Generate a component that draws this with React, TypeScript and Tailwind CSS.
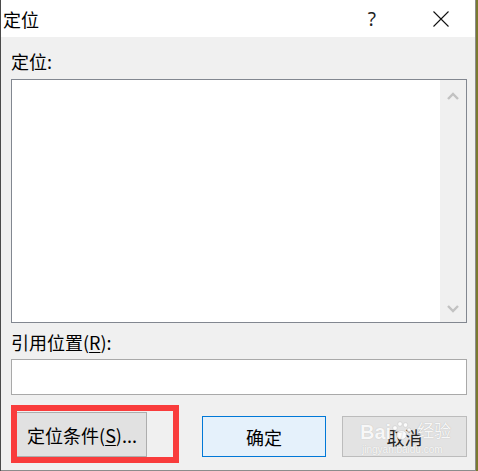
import React from "react";

const font = { fontFamily: '"Noto Sans CJK SC", "Microsoft YaHei", sans-serif' };

function ChevronUp() {
  return (
    <svg width="12" height="10" viewBox="0 0 12 10">
      <path d="M1 8 L6 3 L11 8" fill="none" stroke="#c2c2c2" strokeWidth="2.4" />
    </svg>
  );
}
function ChevronDown() {
  return (
    <svg width="12" height="10" viewBox="0 0 12 10">
      <path d="M1 2 L6 7 L11 2" fill="none" stroke="#c2c2c2" strokeWidth="2.4" />
    </svg>
  );
}

export default function App() {
  return (
    <div className="w-[478px] h-[471px] flex bg-[#7a7a30] text-[#000]" style={font}>
      <div className="w-[1px] h-full bg-[#4a4a4a]" />
      <div className="relative w-[475px] h-full flex flex-col border-r border-b border-[#8c8c8c] bg-[#f0f0f0]">
        {/* title bar */}
        <div className="h-[37px] bg-white flex items-center shrink-0">
          <span className="pl-[2px] text-[18px] leading-[24px]">定位</span>
          <span className="ml-auto mr-[57px] text-[19px] leading-[24px] text-[#222]" style={{ fontFamily: '"Noto Sans", sans-serif' }}>?</span>
          <svg width="16" height="16" viewBox="0 0 16 16" className="mr-[26px]">
            <path d="M0.5 0.5 L15.5 15.5 M15.5 0.5 L0.5 15.5" stroke="#111" strokeWidth="1.1" />
          </svg>
        </div>
        {/* body */}
        <div className="flex flex-col pl-[10px] pr-[8px]">
          <div className="mt-[12px] h-[24px] text-[18px] leading-[24px]">定位:</div>
          <div className="mt-[6px] h-[244px] border border-[#828790] bg-white flex justify-end">
            <div className="w-[26px] h-full bg-[#f0f0f0] flex flex-col items-center justify-between pt-[11px] pb-[8px]">
              <ChevronUp />
              <ChevronDown />
            </div>
          </div>
          <div className="mt-[7px] h-[24px] text-[18px] leading-[24px]">
            引用位置(<span className="underline underline-offset-2">R</span>):
          </div>
          <div className="mt-[5px] h-[36px] border border-[#a9a9a9] bg-white" />
          <div className="mt-[17px] flex items-end">
            <div className="w-[136px] h-[45px] border border-[#adadad] bg-[#e1e1e1] flex items-center justify-center text-[18px] leading-[24px]">
              <span className="pl-[6px]">定位条件(<span className="underline underline-offset-2">S</span>)...</span>
            </div>
            <div className="ml-[55px] w-[124px] h-[41px] border border-[#0078d7] bg-[#e5f1fb] flex items-center justify-center text-[18px] leading-[24px]">
              确定
            </div>
            <div className="relative ml-[16px] w-[125px] h-[41px] border border-[#bcbcbc] bg-[#e3e3e3] flex items-center justify-center text-[18px] leading-[24px] text-[#222] overflow-visible">
              取消
              <div className="absolute left-[17px] top-[4px] flex items-end text-white/90 font-bold" style={{ fontFamily: '"Liberation Sans", "Noto Sans CJK SC", sans-serif' }}>
                <span className="text-[20px] leading-[22px]" style={{ textShadow: "0 0 1px #b0b0b0" }}>Bai</span>
                <svg width="20" height="22" viewBox="0 0 20 22" className="-mt-[10px] opacity-90">
                  <circle cx="4" cy="7" r="2.3" fill="white" stroke="#c8c8c8" strokeWidth="0.6" />
                  <circle cx="9" cy="3" r="2.3" fill="white" stroke="#c8c8c8" strokeWidth="0.6" />
                  <circle cx="14.5" cy="4" r="2.3" fill="white" stroke="#c8c8c8" strokeWidth="0.6" />
                  <circle cx="18" cy="9" r="2" fill="white" stroke="#c8c8c8" strokeWidth="0.6" />
                  <ellipse cx="10.5" cy="14" rx="5" ry="4.5" fill="white" stroke="#c8c8c8" strokeWidth="0.6" />
                </svg>
                <span className="ml-[6px] text-[17px] leading-[22px] font-normal" style={{ textShadow: "0 0 1px #a8a8a8" }}>经验</span>
              </div>
              <div className="absolute left-[19px] top-[27px] text-[10px] leading-[12px] text-white/90" style={{ fontFamily: '"Liberation Sans", sans-serif', textShadow: "0 0 1px #b0b0b0" }}>
                jingyan.baidu.com
              </div>
            </div>
          </div>
        </div>
        {/* red annotation */}
        <div className="absolute left-[10px] top-[405px] w-[168px] h-[58px] border-[6px] border-[#f93c3c]" />
      </div>
      <div className="w-[2px] h-full bg-[#7a7a30]" />
    </div>
  );
}
